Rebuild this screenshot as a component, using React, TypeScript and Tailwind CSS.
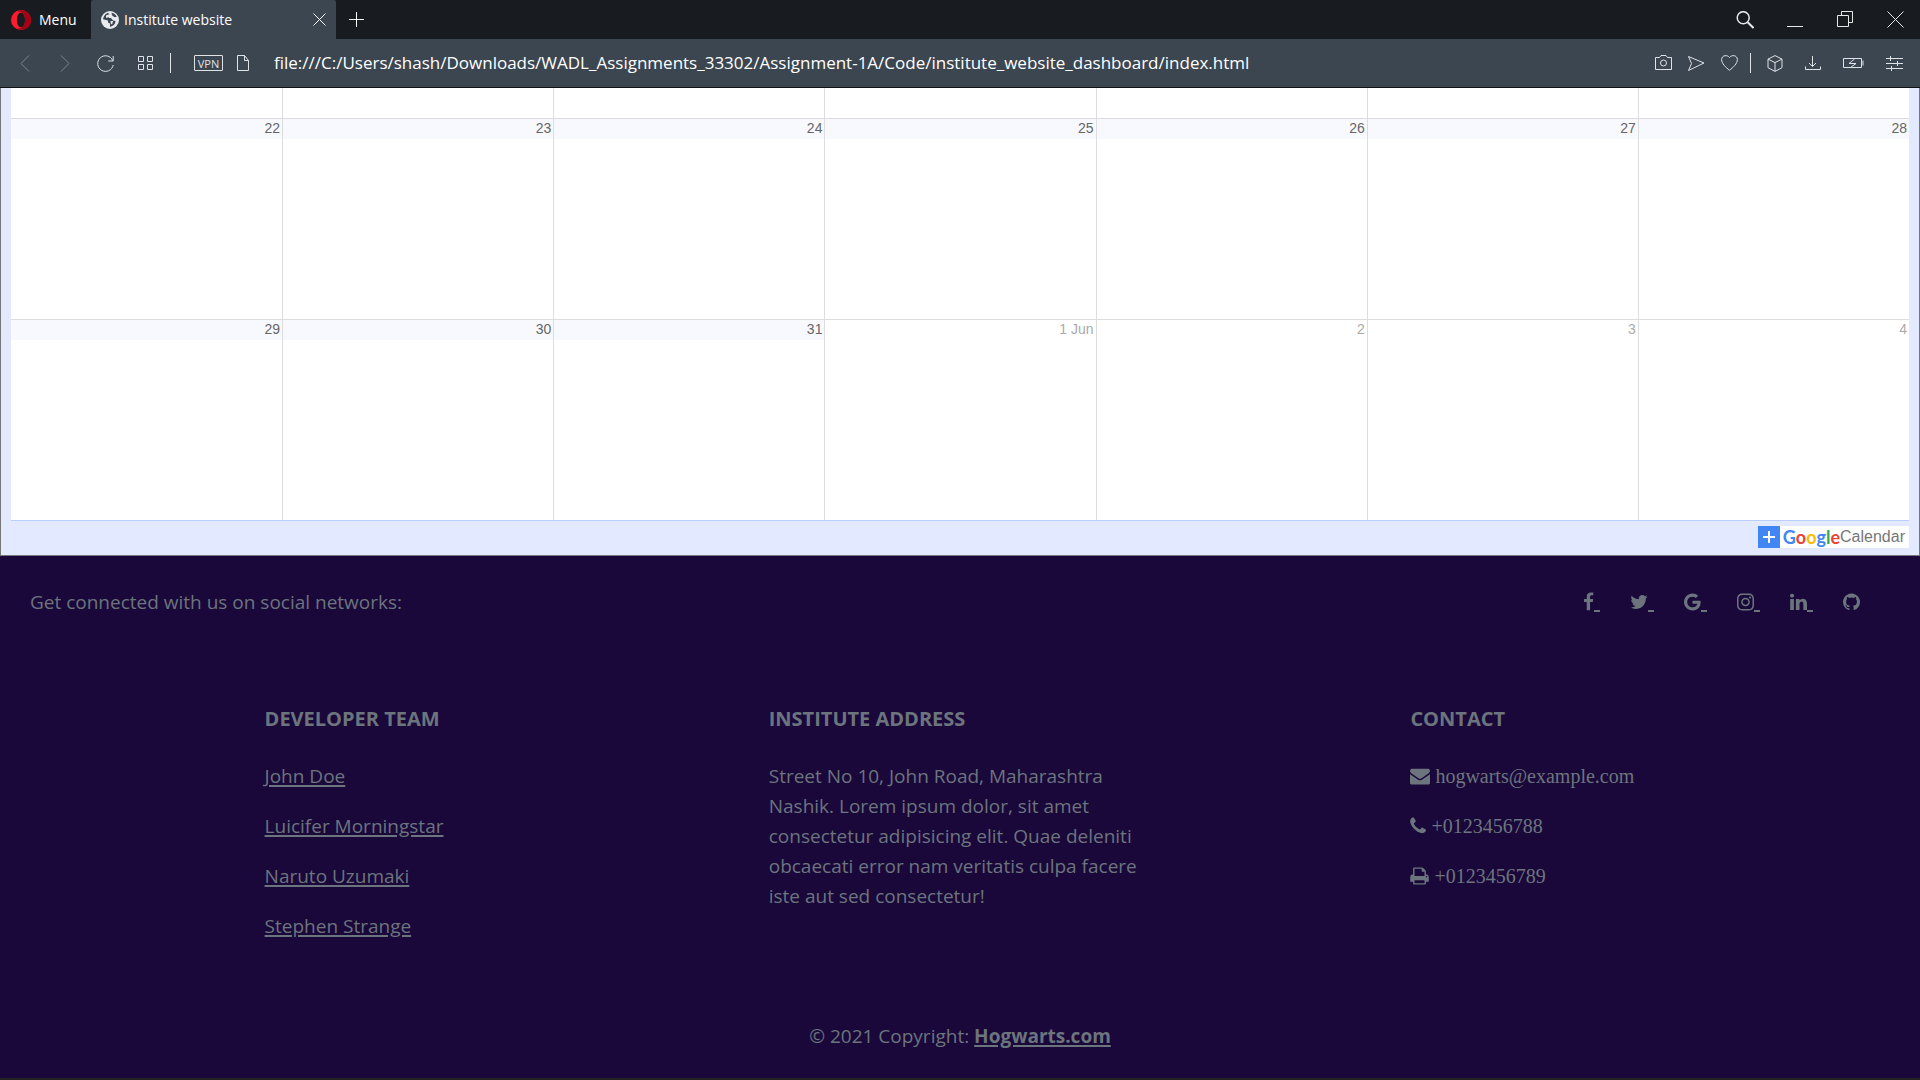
import React from "react";
import { FaInstagram } from "react-icons/fa";

const line = {
  fill: "none",
  stroke: "currentColor",
  strokeWidth: 1,
} as const;

type GlyphProps = { d: string; x: number; w: number; className: string };

function Glyph({ d, x, w, className }: GlyphProps) {
  return (
    <svg viewBox={`${x} 0 ${w} 1792`} className={className} fill="currentColor" aria-hidden="true">
      <path d={d} />
    </svg>
  );
}

const facebook =
  "M1343 12v264h-157q-86 0-116 36t-30 108v189h293l-39 296h-254v759h-306v-759h-255v-296h255v-218q0-186 104-288.5t277-102.5q147 0 228 12z";
const twitter =
  "M1684 408q-67 98-162 167 1 14 1 42 0 130-38 259.5t-115.5 248.5-184.5 210.5-258 146-323 54.5q-271 0-496-145 35 4 78 4 225 0 401-138-105-2-188-64.5t-114-159.5q33 5 61 5 43 0 85-11-112-23-185.5-111.5t-73.5-205.5v-4q68 38 146 41-66-44-105-115t-39-154q0-88 44-163 121 149 294.5 238.5t371.5 99.5q-8-38-8-74 0-134 94.5-228.5t228.5-94.5q140 0 236 102 109-21 205-78-37 115-142 178 93-10 186-50z";
const google =
  "M896 786h725q12 67 12 128 0 217-91 387.5t-259.5 266.5-386.5 96q-157 0-299-60.5t-245-163.5-163.5-245-60.5-299 60.5-299 163.5-245 245-163.5 299-60.5q300 0 515 201l-209 201q-123-119-306-119-129 0-238.5 65t-173.5 176.5-64 243.5 64 243.5 173.5 176.5 238.5 65q87 0 160-24t120-60 82-82 51.5-87 22.5-78h-436v-264z";
const linkedin =
  "M477 625v991h-330v-991h330zm21-306q1 73-50.5 122t-135.5 49h-2q-82 0-132-49t-50-122q0-74 51.5-122.5t134.5-48.5 133 48.5 51 122.5zm1166 729v568h-329v-530q0-105-40.5-164.5t-126.5-59.5q-63 0-105.5 34.5t-63.5 85.5q-11 30-11 81v553h-329q2-399 2-647t-1-296l-1-48h329v144h-2q20-32 41-56t56.5-52 87-43.5 114.5-15.5q171 0 275 113.5t104 332.5z";
const github =
  "M896 128q209 0 385.5 103t279.5 279.5 103 385.5q0 251-146.5 451.5t-378.5 277.5q-27 5-40-7t-13-30q0-3 .5-76.5t.5-134.5q0-97-52-142 57-6 102.5-18t94-39 81-66.5 53-105 20.5-150.5q0-119-79-206 37-91-8-204-28-9-81 11t-92 44l-38 24q-93-26-192-26t-192 26q-16-11-42.5-27t-83.5-38.5-85-13.5q-45 113-8 204-79 87-79 206 0 85 20.5 150t52.5 105 80.5 67 94 39 102.5 18q-39 36-49 103-21 10-45 15t-57 5-65.5-21.5-55.5-62.5q-19-32-48.5-52t-49.5-24l-20-3q-21 0-29 4.5t-5 11.5 9 14 13 12l7 5q22 10 43.5 38t31.5 51l10 23q13 38 44 61.5t67 30 69.5 7 55.5-3.5l23-4q0 38 .5 88.5t.5 54.5q0 18-13 30t-40 7q-232-77-378.5-277.5t-146.5-451.5q0-209 103-385.5t279.5-279.5 385.5-103z";
const envelope =
  "M1792 710v794q0 66-47 113t-113 47h-1472q-66 0-113-47t-47-113v-794q44 49 101 87 362 246 497 345 57 42 92.5 65.5t94.5 48 110 24.5h2q51 0 110-24.5t94.5-48 92.5-65.5q170-123 498-345 57-39 100-87zm0-294q0 79-49 151t-122 123q-376 261-468 325-10 7-42.5 31t-54 38.5-52 32.5-57.5 27-50 9h-2q-23 0-50-9t-57.5-27-52-32.5-54-38.5-42.5-31q-91-64-262-182.5t-205-142.5q-62-42-117-115.5t-55-136.5q0-78 41.5-130t118.5-52h1472q65 0 112.5 47t47.5 113z";
const phone =
  "M1600 1240q0 27-10 70.5t-21 68.5q-21 50-122 106-94 51-186 51-27 0-53-3.5t-57.5-12.5-47-14.5-55.5-20.5-49-18q-98-35-175-83-127-79-264-216t-216-264q-48-77-83-175-3-9-18-49t-20.5-55.5-14.5-47-12.5-57.5-3.5-53q0-92 51-186 56-101 106-122 25-11 68.5-21t70.5-10q14 0 21 3 18 6 53 76 11 19 30 54t35 63.5 31 53.5q3 4 17.5 25t21.5 35.5 7 28.5q0 20-28.5 50t-62 55-62 53-28.5 46q0 9 5 22.5t8.5 20.5 14 24 11.5 19q76 137 174 235t235 174q2 1 19 11.5t24 14 20.5 8.5 22.5 5q18 0 46-28.5t53-62 55-62 50-28.5q14 0 28.5 7t35.5 21.5 25 17.5q25 15 53.5 31t63.5 35 54 30q70 35 76 53 3 7 3 21z";
const printer =
  "M448 1536h896v-256h-896v256zm0-640h896v-384h-160q-40 0-68-28t-28-68v-160h-640v640zm1152 64q0-26-19-45t-45-19-45 19-19 45 19 45 45 19 45-19 19-45zm128 0v416q0 13-9.5 22.5t-22.5 9.5h-224v160q0 40-28 68t-68 28h-960q-40 0-68-28t-28-68v-160h-224q-13 0-22.5-9.5t-9.5-22.5v-416q0-79 56.5-135.5t135.5-56.5h64v-544q0-40 28-68t68-28h672q40 0 88 20t76 48l152 152q28 28 48 76t20 88v256h64q79 0 135.5 56.5t56.5 135.5z";

function TitleBar() {
  return (
    <header className="flex h-[39px] items-stretch bg-[#181c20] text-white">
      <button className="flex w-[91px] items-center gap-2 pl-[11px] text-[14px]">
        <svg viewBox="0 0 20 20" className="size-5 shrink-0" aria-hidden="true">
          <path fill="#ff1b2d" fillRule="evenodd" d="M10 0a10 10 0 1 0 0 20a10 10 0 0 0 0-20zM10 2.6c2.3 0 4.100 3.200 4.100 7.400s-1.800 7.400-4.100 7.400s-4.100-3.200-4.100-7.400s1.800-7.400 4.100-7.400z" />
          <path fill="#a70014" d="M10 0a10 10 0 0 1 0 20c-1.500 0-2.800-.9-3.600-2.300c1 .8 2.200 1 3.400.5c2.500-.9 4.300-4.200 4.300-8.200s-1.800-7.300-4.300-8.200c-1.200-.5-2.400-.3-3.400.5C7.200.9 8.500 0 10 0z" />
        </svg>
        Menu
      </button>
      <div className="flex w-[245px] items-center rounded-t-xs bg-[#3b4651] pr-[10px] pl-[10px]">
        <svg viewBox="0 0 18 18" className="size-[18px] shrink-0" aria-hidden="true">
          <circle cx="9" cy="9" r="9" fill="#e8eaed" />
          <path fill="#3b4651" d="M7 1.800L8.500 3.500L6.500 5.500L8.200 7H10l2 2.500l2.500.5c-.2 2-1 3.500-2.500 4.500l-3 1.500v-3.500L7 11.500V9.500L2 8.200C2.500 5 4.500 2.700 7 1.800zM10.500 1.800c2.500.5 4.500 2 5.300 4.200h-2.600L11 4.200z" />
          <path fill="#e8eaed" d="M5 4.500L8.500 3L7.500 6L5 7zM9.500 10h2.500l-.5 2.500l-1.500 1z" />
        </svg>
        <span className="ml-[5px] flex-1 text-[14px]">Institute website</span>
        <button aria-label="Close tab">
          <svg viewBox="0 0 13 13" className="size-[13px]" {...line}>
            <path d="M.5.5l12 12M12.500.5l-12 12" />
          </svg>
        </button>
      </div>
      <button aria-label="New tab" className="ml-[13px] pb-px">
        <svg viewBox="0 0 15 15" className="size-[15px]" {...line}>
          <path d="M7.500 0v15M0 7.500h15" />
        </svg>
      </button>
      <div className="ml-auto flex items-center gap-[33px] pr-4 text-[#e6e8ea]">
        <button aria-label="Search">
          <svg viewBox="0 0 18 18" className="size-[18px]" fill="none" stroke="currentColor" strokeWidth="1.500">
            <circle cx="7.200" cy="6.700" r="6" />
            <path d="M11.700 11.200l5.800 5.800" strokeWidth="2" />
          </svg>
        </button>
        <button aria-label="Minimize">
          <svg viewBox="0 0 17 17" className="size-[17px]" {...line}>
            <path d="M0 15.500h16" />
          </svg>
        </button>
        <button aria-label="Restore">
          <svg viewBox="0 0 17 17" className="size-[17px]" {...line}>
            <path d="M.5 4.500h11v11H.5zM4.500 4.500v-4h11v11h-4" />
          </svg>
        </button>
        <button aria-label="Close window">
          <svg viewBox="0 0 17 17" className="size-[17px]" {...line}>
            <path d="M.5.5l16 16M16.500.5l-16 16" />
          </svg>
        </button>
      </div>
    </header>
  );
}

function Toolbar() {
  return (
    <nav className="flex h-[49px] items-center border-b border-[#101418] bg-[#3b4651] pr-[17px] pl-[5px] text-[#dfe3e6]">
      <button aria-label="Back" className="flex w-10 justify-center text-[#7b848c]">
        <svg viewBox="0 0 10 17" className="h-[17px] w-[10px]" {...line}>
          <path d="M9 .5l-8 8l8 8" />
        </svg>
      </button>
      <button aria-label="Forward" className="flex w-10 justify-center text-[#7b848c]">
        <svg viewBox="0 0 10 17" className="h-[17px] w-[10px]" {...line}>
          <path d="M1 .5l8 8l-8 8" />
        </svg>
      </button>
      <button aria-label="Reload" className="flex w-10 justify-center">
        <svg viewBox="0 0 17 17" className="size-[17px]" {...line}>
          <path d="M15.700 5.500A7.800 7.800 0 1 0 16.200 10M16.200 1v5h-5" />
        </svg>
      </button>
      <button aria-label="Tab overview" className="flex w-10 justify-center">
        <svg viewBox="0 0 17 16" className="h-4 w-[17px]" {...line}>
          <path d="M1.500 1.500h5v5h-5zM10.500 1.500h5v5h-5zM1.500 9.500h5v5h-5zM10.500 9.500h5v5h-5z" />
        </svg>
      </button>
      <span className="ml-[5px] h-5 w-px bg-[#dfe3e6]" />
      <button className="ml-[23px] flex h-4 w-[29px] items-center justify-center rounded-[1px] border border-[#dfe3e6] text-[11px] leading-none">
        VPN
      </button>
      <svg viewBox="0 0 13 16" className="ml-[14px] h-4 w-[13px]" {...line} aria-hidden="true">
        <path d="M.5.5h7l4 5v10H.5zM7.500.5v5h4" />
      </svg>
      <input
        aria-label="Address"
        spellCheck={false}
        defaultValue="file:///C:/Users/shash/Downloads/WADL_Assignments_33302/Assignment-1A/Code/institute_website_dashboard/index.html"
        className="ml-6 min-w-0 flex-1 bg-transparent text-[17px] text-white outline-none"
      />
      <div className="flex items-center gap-4">
        <button aria-label="Snapshot">
          <svg viewBox="0 0 17 16" className="h-4 w-[17px]" {...line}>
            <path d="M.5 2.500h4l1.500-2h5l1.500 2h4v12H.5z" />
            <circle cx="8.500" cy="8" r="3" />
          </svg>
        </button>
        <button aria-label="Send to My Flow">
          <svg viewBox="0 0 17 16" className="h-4 w-[17px]" {...line}>
            <path d="M.5 1.500L16 8L.5 15.500L3.500 8.500z" />
          </svg>
        </button>
        <button aria-label="Bookmark">
          <svg viewBox="0 0 17 16" className="h-4 w-[17px]" {...line}>
            <path d="M8.500 2.500C6.500-.3 1-.2.6 4.500C.5 8.500 5 12.500 8.500 15.300C12 12.500 16.500 8.500 16.400 4.500C16-.2 10.500-.3 8.500 2.500z" />
          </svg>
        </button>
      </div>
      <span className="ml-3 h-5 w-px bg-[#dfe3e6]" />
      <div className="ml-4 flex items-center gap-[22px]">
        <button aria-label="Crypto wallet">
          <svg viewBox="0 0 16 17" className="h-[17px] w-4" {...line}>
            <path d="M8 .6l7 3.500v8.600l-7 3.700l-7-3.700V4.100zM1 4.100l7 3.500l7-3.500M8 7.600v8.800" />
          </svg>
        </button>
        <button aria-label="Downloads">
          <svg viewBox="0 0 16 16" className="size-4" {...line}>
            <path d="M7.500 1v10.500M4 8l3.500 3.500L11 8M.5 11.500v3h15v-3" />
          </svg>
        </button>
        <button aria-label="Battery saver">
          <svg viewBox="0 0 21 16" className="h-4 w-[21px]" {...line}>
            <path d="M.5 3.500h18v9H.5zM20 5.500v5" />
            <path d="M11.500 4L6 8.500h7L7.500 12.500" />
          </svg>
        </button>
        <button aria-label="Easy setup">
          <svg viewBox="0 0 17 16" className="h-4 w-[17px]" {...line}>
            <path d="M0 3.500h17M0 8.500h17M0 13.500h17M4.500 1v5M11.500 6v5M5.500 11v5" />
          </svg>
        </button>
      </div>
    </nav>
  );
}

const weeks = [
  ["22", "23", "24", "25", "26", "27", "28"],
  ["29", "30", "31", "1 Jun", "2", "3", "4"],
];

function Calendar() {
  return (
    <section className="border-x border-b border-[#767676] bg-[#e3e9ff] px-[10px] font-['Liberation_Sans',sans-serif]">
      <table className="w-full table-fixed border-separate border-spacing-0 border-b border-[#b9d0ff] bg-white">
        <tbody>
          <tr className="h-[30px]">
            {weeks[0].map((d) => (
              <td key={d} className="border-l border-[#ddd] first:border-l-0" />
            ))}
          </tr>
          {weeks.map((week, w) => (
            <tr key={w} className="h-[201px]">
              {week.map((d, i) => {
                const next = w === 1 && i > 2;
                return (
                  <td key={d} className="border-t border-l border-[#ddd] p-0 align-top first:border-l-0">
                    <div
                      className={
                        next
                          ? "h-5 pr-[2px] text-right text-[14px] leading-[19px] text-[#aaa]"
                          : "h-5 bg-[#f8f9ff] pr-[2px] text-right text-[14px] leading-[19px] text-[#666]"
                      }
                    >
                      {d}
                    </div>
                  </td>
                );
              })}
            </tr>
          ))}
        </tbody>
      </table>
      <div className="flex justify-end pt-[5px] pb-[7px]">
        <a href="#calendar" className="flex h-[22px] items-center bg-white pr-1 leading-6">
          <svg viewBox="0 0 22 22" className="size-[22px]" aria-hidden="true">
            <path fill="#4285f4" d="M0 0h22v22H0z" />
            <path stroke="#fff" strokeWidth="2" d="M11 5v12M5 11h12" />
          </svg>
          <span className="ml-[3px] font-['Lato',sans-serif] text-[18px] font-bold">
            <span className="text-[#4285f4]">G</span>
            <span className="text-[#ea4335]">o</span>
            <span className="text-[#fbbc05]">o</span>
            <span className="text-[#4285f4]">g</span>
            <span className="text-[#34a853]">l</span>
            <span className="text-[#ea4335]">e</span>
          </span>
          <span className="text-[16px] text-[#777]">Calendar</span>
        </a>
      </div>
    </section>
  );
}

const team = ["John Doe", "Luicifer Morningstar", "Naruto Uzumaki", "Stephen Strange"];

const socials = [
  { name: "Facebook", icon: <Glyph d={facebook} x={384} w={1024} className="inline h-5 w-[11px]" /> },
  { name: "Twitter", icon: <Glyph d={twitter} x={64} w={1664} className="inline h-5 w-[18px]" /> },
  { name: "Google", icon: <Glyph d={google} x={128} w={1536} className="inline h-5 w-[17px]" /> },
  { name: "Instagram", icon: <FaInstagram className="inline h-5 w-[17px]" /> },
  { name: "LinkedIn", icon: <Glyph d={linkedin} x={128} w={1536} className="inline h-5 w-[17px]" /> },
];

function Footer() {
  return (
    <footer className="flex-1 bg-[#1a083b] text-[19px] leading-[30px] text-[#6c757d]">
      <section className="flex items-center justify-between pt-[31px] pr-[60px] pb-[30px] pl-[30px]">
        <span>Get connected with us on social networks:</span>
        <div className="flex gap-[30px]">
          {socials.map((s) => (
            <a key={s.name} href="#social" aria-label={s.name} className="flex items-center">
              {s.icon}
              <span className="mt-[18px] h-[2px] w-[6px] bg-[#6c757d]" />
            </a>
          ))}
          <a href="#social" aria-label="GitHub" className="flex items-center">
            <Glyph d={github} x={128} w={1536} className="inline h-5 w-[17px]" />
          </a>
        </div>
      </section>
      <section className="mx-auto flex max-w-[1650px] pt-[60px] pb-[30px]">
        <div className="mx-auto w-1/6 px-[15px]">
          <h6 className="mb-[30px] text-[20px] leading-6 font-bold">DEVELOPER TEAM</h6>
          {team.map((name) => (
            <p key={name} className="mb-5">
              <a href="#team" className="whitespace-nowrap underline decoration-2 underline-offset-2">{name}</a>
            </p>
          ))}
        </div>
        <div className="mx-auto w-1/4 px-[15px]">
          <h6 className="mb-[30px] text-[20px] leading-6 font-bold">INSTITUTE ADDRESS</h6>
          <p>
            Street No 10, John Road, Maharashtra Nashik. Lorem ipsum dolor, sit amet consectetur adipisicing elit. Quae
            deleniti obcaecati error nam veritatis culpa facere iste aut sed consectetur!
          </p>
        </div>
        <div className="mx-auto w-1/6 px-[15px]">
          <h6 className="mb-[30px] text-[20px] leading-6 font-bold">CONTACT</h6>
          <div className="font-['Liberation_Serif',serif] text-[20px]">
            <p className="mb-5 flex items-center gap-[5px]">
              <Glyph d={envelope} x={0} w={1792} className="h-5 w-5" />
              hogwarts@example.com
            </p>
            <p className="mb-5 flex items-center gap-[5px]">
              <Glyph d={phone} x={192} w={1408} className="h-5 w-4" />
              +0123456788
            </p>
            <p className="mb-5 flex items-center gap-[5px]">
              <Glyph d={printer} x={64} w={1664} className="h-5 w-[19px]" />
              +0123456789
            </p>
          </div>
        </div>
      </section>
      <div className="pt-[30px] pb-[27px] text-center">
        © 2021 Copyright:{" "}
        <a href="#home" className="font-bold underline decoration-2 underline-offset-2">Hogwarts.com</a>
      </div>
    </footer>
  );
}

export default function App() {
  return (
    <div className="flex min-h-screen flex-col border-b-2 border-[#222] font-['Open_Sans',sans-serif]">
      <TitleBar />
      <Toolbar />
      <Calendar />
      <Footer />
    </div>
  );
}
